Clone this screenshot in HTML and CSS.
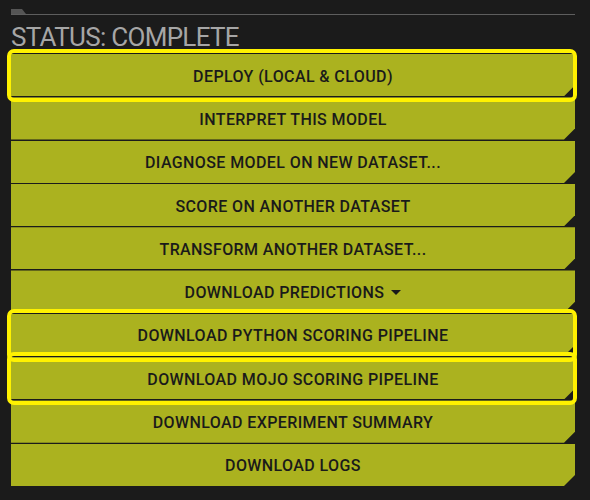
FILE: index.html
```html
<!DOCTYPE html>
<html lang="en">
<head>
  <meta charset="UTF-8" />
  <meta name="viewport" content="width=device-width, initial-scale=1" />
  <title>Experiment Status</title>
  <link rel="stylesheet" href="styles.css">
</head>
<body>

<div class="panel">
  <div class="rule">
    <div class="rule-tab"></div>
    <div class="rule-line"></div>
  </div>

  <h2 class="status">STATUS: COMPLETE</h2>

  <div class="actions">
    <div class="action marked"><button class="action-btn">DEPLOY (LOCAL &amp; CLOUD)</button></div>
    <div class="action"><button class="action-btn">INTERPRET THIS MODEL</button></div>
    <div class="action"><button class="action-btn">DIAGNOSE MODEL ON NEW DATASET...</button></div>
    <div class="action"><button class="action-btn">SCORE ON ANOTHER DATASET</button></div>
    <div class="action"><button class="action-btn">TRANSFORM ANOTHER DATASET...</button></div>
    <div class="action"><button class="action-btn">DOWNLOAD PREDICTIONS <span class="caret"></span></button></div>
    <div class="action marked"><button class="action-btn">DOWNLOAD PYTHON SCORING PIPELINE</button></div>
    <div class="action marked"><button class="action-btn">DOWNLOAD MOJO SCORING PIPELINE</button></div>
    <div class="action"><button class="action-btn">DOWNLOAD EXPERIMENT SUMMARY</button></div>
    <div class="action"><button class="action-btn">DOWNLOAD LOGS</button></div>
  </div>
</div>

</body>
</html>
```

FILE: styles.css
```css
/* Basic Reset */
* {
  margin: 0; padding: 0; box-sizing: border-box;
}
body {
  background: #1b1b1b;
  font-family: Roboto, 'Liberation Sans', sans-serif;
  min-height: 100vh;
}
.panel {
  padding: 9px 15px 0 11px;
}
.rule-tab {
  width: 15px;
  height: 5px;
  background: #555;
  clip-path: polygon(0 0, 11px 0, 100% 100%, 0 100%);
}
.rule-line {
  height: 1px;
  background: #5e5e5e;
}
.status {
  margin-top: 7px;
  font-size: 26px;
  line-height: 30px;
  font-weight: 400;
  letter-spacing: -0.7px;
  color: #a6a6a6;
}
.actions {
  margin-top: 2px;
  display: flex;
  flex-direction: column;
  gap: 1px;
}
.action {
  position: relative;
}
.action-btn {
  display: flex;
  align-items: center;
  justify-content: center;
  width: 100%;
  height: 42.3px;
  padding-top: 2px;
  background: #abb21f;
  border: none;
  color: #1a1a1a;
  font-family: inherit;
  font-size: 16px;
  font-weight: 500;
  letter-spacing: 0.4px;
  cursor: pointer;
  clip-path: polygon(0 0, 100% 0, 100% calc(100% - 11px), calc(100% - 11px) 100%, 0 100%);
}
.action-btn:hover {
  background: #bcc32a;
}
.caret {
  display: inline-block;
  margin-left: 7px;
  border-left: 5.5px solid transparent;
  border-right: 5.5px solid transparent;
  border-top: 5px solid #1a1a1a;
}
/* yellow callout drawn round some of the buttons */
.action.marked::after {
  content: '';
  position: absolute;
  top: -5px;
  bottom: -6px;
  left: -4px;
  right: -2px;
  border: 4px solid #fff200;
  border-radius: 7px;
  z-index: 1;
  pointer-events: none;
}
```
